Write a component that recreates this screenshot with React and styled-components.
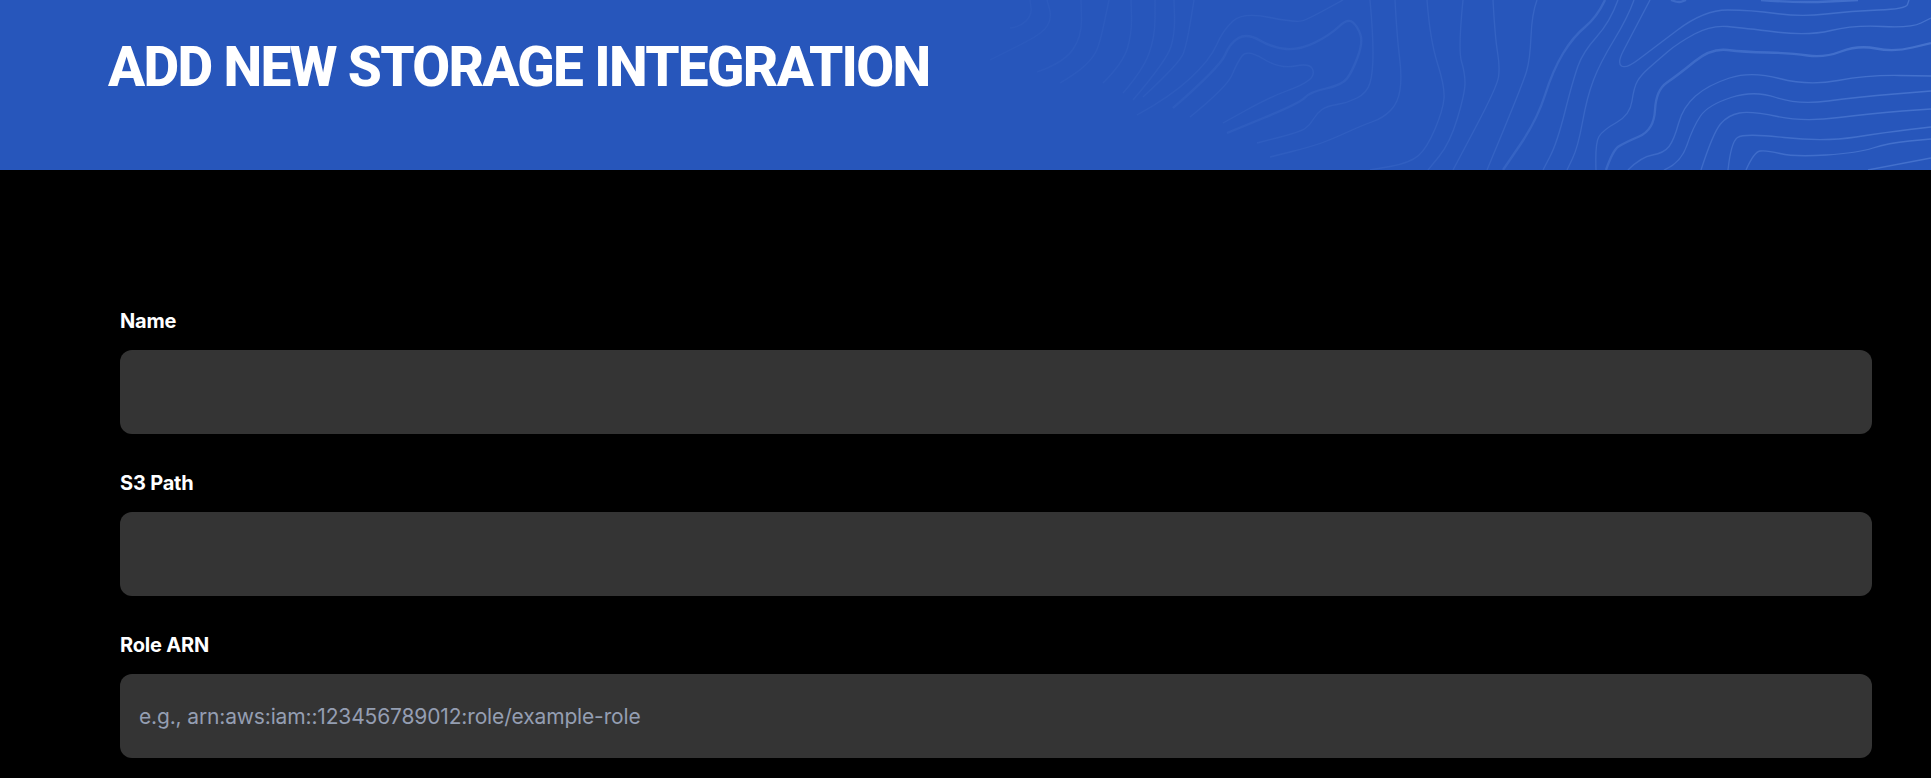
import styled, { createGlobalStyle } from "styled-components";

const GlobalStyle = createGlobalStyle`
  html, body {
    margin: 0;
    background: #000;
  }
`;

const Page = styled.div`
  min-height: 778px;
  background: #000;
  color: #fff;
  font-family: Inter, "Liberation Sans", sans-serif;
`;

const Banner = styled.header`
  position: relative;
  height: 170px;
  padding: 36px 0 0 108px;
  box-sizing: border-box;
  background: #2756bb;
  overflow: hidden;
`;

const Contours = styled.svg`
  position: absolute;
  inset: 0;
  width: 100%;
  height: 100%;
`;

const Title = styled.h1`
  position: relative;
  margin: 0;
  font-family: Roboto, "Liberation Sans", sans-serif;
  font-size: 55px;
  line-height: 62px;
  font-weight: 800;
  letter-spacing: -1.7px;
  text-transform: uppercase;
`;

const Form = styled.form`
  display: flex;
  flex-direction: column;
  gap: 37px;
  padding: 139px 59px 20px 120px;
`;

const Field = styled.div`
  display: flex;
  flex-direction: column;
  gap: 17px;
`;

const Label = styled.label`
  font-size: 20px;
  line-height: 24px;
  font-weight: 700;
  letter-spacing: -0.2px;
`;

const Input = styled.input`
  height: 84px;
  box-sizing: border-box;
  padding: 0 19px;
  border: 0;
  border-radius: 12px;
  background: #343434;
  color: #fff;
  font-family: Inter, sans-serif;
  font-size: 21px;
  letter-spacing: -0.15px;
  outline: none;

  &::placeholder {
    color: #949eb2;
    opacity: 1;
  }
`;

// traced from the topographic pattern, in page pixels
const lines = [
  { w: 1, p: [[990, 60], [1010, 50], [1043, 33], [1052, 18], [1047, 0]] },
  { w: 1, p: [[1010, 28], [1020, 27], [1032, 15], [1030, 0]] },
  { w: 1, p: [[1037, 72], [1063, 63], [1082, 37], [1081, 0]] },
  { w: 1, p: [[1060, 83], [1077, 73], [1093, 58], [1100, 43], [1109, 0]] },
  { w: 1, p: [[1103, 83], [1123, 63], [1132, 33], [1131, 0]] },
  { w: 1, p: [[1123, 93], [1143, 70], [1155, 37], [1155, 0]] },
  { w: 1, p: [[1133, 100], [1167, 60], [1175, 33], [1174, 0]] },
  { w: 1, p: [[1143, 97], [1180, 63], [1187, 43], [1194, 0]] },
  { w: 1, p: [[1137, 115], [1170, 97], [1210, 60], [1223, 30], [1243, 12], [1297, 23], [1310, 18], [1343, 0]] },
  { w: 2, p: [[1173, 108], [1220, 67], [1230, 43], [1247, 33], [1273, 48], [1300, 50], [1330, 35], [1348, 18], [1358, 27], [1363, 43], [1352, 72], [1342, 85], [1310, 92], [1300, 103], [1227, 133]] },
  { w: 1, p: [[1190, 117], [1227, 87], [1237, 63], [1247, 49], [1280, 69], [1310, 63], [1315, 75], [1303, 85], [1270, 97], [1223, 123]] },
  { w: 1, p: [[1370, 0], [1373, 33], [1373, 73], [1367, 93], [1347, 103], [1327, 106], [1317, 113], [1310, 125], [1300, 132], [1257, 143]] },
  { w: 1, p: [[1395, 0], [1397, 37], [1402, 77], [1398, 103], [1383, 118], [1363, 125], [1330, 140], [1310, 147], [1270, 157]] },
  { w: 1, p: [[1427, 0], [1430, 40], [1445, 87], [1443, 110], [1427, 148], [1410, 163], [1370, 170]] },
  { w: 1, p: [[1463, 0], [1458, 50], [1465, 73], [1465, 93], [1450, 143], [1428, 170]] },
  { w: 1, p: [[1493, 0], [1495, 37], [1500, 67], [1497, 87], [1453, 170]] },
  { w: 1, p: [[1537, 0], [1532, 13], [1530, 60], [1523, 83], [1487, 170]] },
  { w: 2, p: [[1605, 0], [1597, 17], [1573, 37], [1553, 70], [1537, 120], [1503, 170]] },
  { w: 1, p: [[1618, 0], [1610, 22], [1583, 52], [1573, 80], [1557, 143], [1543, 170]] },
  { w: 1, p: [[1634, 0], [1628, 17], [1600, 63], [1587, 97], [1578, 147], [1567, 170]] },
  { w: 1, p: [[1650, 0], [1630, 38], [1617, 63], [1626, 69], [1651, 50], [1704, 10], [1751, 10], [1801, 17], [1851, 11], [1906, 9], [1909, 0]] },
  { w: 1, p: [[1596, 170], [1595, 143], [1603, 130], [1630, 115], [1634, 87], [1641, 75], [1658, 60], [1678, 43], [1711, 25], [1744, 28], [1808, 36], [1854, 25], [1911, 28], [1931, 18]] },
  { w: 2, p: [[1606, 170], [1613, 150], [1624, 143], [1654, 130], [1656, 90], [1678, 75], [1711, 48], [1744, 52], [1791, 53], [1824, 58], [1858, 45], [1894, 52], [1931, 43]] },
  { w: 1, p: [[1628, 170], [1641, 157], [1664, 153], [1674, 140], [1683, 107], [1708, 85], [1751, 71], [1808, 86], [1868, 75], [1931, 76]] },
  { w: 1, p: [[1664, 170], [1681, 163], [1693, 127], [1708, 105], [1754, 90], [1798, 105], [1858, 97], [1931, 91]] },
  { w: 1, p: [[1701, 170], [1713, 133], [1728, 115], [1751, 111], [1804, 122], [1874, 113], [1931, 109]] },
  { w: 1, p: [[1728, 170], [1731, 142], [1744, 133], [1824, 142], [1888, 132], [1931, 127]] },
  { w: 1, p: [[1746, 170], [1754, 152], [1766, 150], [1794, 157], [1858, 153], [1888, 143], [1931, 139]] },
  { w: 1, p: [[1868, 170], [1931, 158]] },
  { w: 2, p: [[1671, 0], [1678, 3], [1686, 0]] },
  { w: 2, p: [[1761, 0], [1798, 3], [1858, 0]] },
];

// smooth a list of points with quadratic curves through the midpoints
const toPath = (p) => {
  let d = `M${p[0][0]} ${p[0][1]}`;
  for (let i = 1; i < p.length - 1; i++) {
    const mx = (p[i][0] + p[i + 1][0]) / 2;
    const my = (p[i][1] + p[i + 1][1]) / 2;
    d += `Q${p[i][0]} ${p[i][1]} ${mx} ${my}`;
  }
  const last = p[p.length - 1];
  return `${d}L${last[0]} ${last[1]}`;
};

const Topography = () => (
  <Contours viewBox="0 0 1931 170" aria-hidden="true">
    <defs>
      <linearGradient id="fade" gradientUnits="userSpaceOnUse" x1="1000" y1="0" x2="1931" y2="0">
        <stop offset="0" stopColor="#6f9ae8" stopOpacity="0.05" />
        <stop offset="0.45" stopColor="#6f9ae8" stopOpacity="0.13" />
        <stop offset="0.7" stopColor="#6f9ae8" stopOpacity="0.28" />
        <stop offset="1" stopColor="#6f9ae8" stopOpacity="0.4" />
      </linearGradient>
    </defs>
    {lines.map((line, i) => (
      <path key={i} d={toPath(line.p)} fill="none" stroke="url(#fade)" strokeWidth={line.w + 0.3} />
    ))}
  </Contours>
);

export default function App() {
  return (
    <Page>
      <GlobalStyle />
      <Banner>
        <Topography />
        <Title>Add new storage integration</Title>
      </Banner>
      <Form>
        <Field>
          <Label htmlFor="name">Name</Label>
          <Input id="name" type="text" />
        </Field>
        <Field>
          <Label htmlFor="path">S3 Path</Label>
          <Input id="path" type="text" />
        </Field>
        <Field>
          <Label htmlFor="arn">Role ARN</Label>
          <Input id="arn" type="text" placeholder="e.g., arn:aws:iam::123456789012:role/example-role" />
        </Field>
      </Form>
    </Page>
  );
}
